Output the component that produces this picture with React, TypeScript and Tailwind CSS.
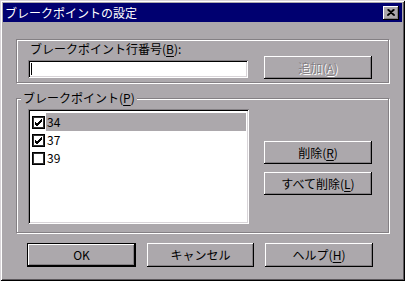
import React from "react";

const FONT = { fontFamily: '"Noto Sans CJK JP", "Noto Sans", sans-serif' };

const raised =
  "shadow-[inset_-1px_-1px_0_#000,inset_1px_1px_0_#fff,inset_-2px_-2px_0_#848084]";
const sunken =
  "shadow-[inset_1px_1px_0_#848084,inset_-1px_-1px_0_#fff,inset_2px_2px_0_#000,inset_-2px_-2px_0_#d8d4d8]";
const etched = "border border-[#848084] shadow-[inset_1px_1px_0_#fff,1px_1px_0_#fff]";

function U({ children }: { children: React.ReactNode }) {
  return <span className="underline underline-offset-2">{children}</span>;
}

function Btn({
  children,
  def,
  disabled,
  className = "",
}: {
  children: React.ReactNode;
  def?: boolean;
  disabled?: boolean;
  className?: string;
}) {
  return (
    <div
      className={`flex items-center justify-center bg-[#aca8ac] text-[12px] leading-none ${
        def ? "border border-black" : ""
      } ${className}`}
    >
      <div
        className={`flex h-full w-full items-center justify-center ${raised} ${
          disabled ? "text-[#848084] [text-shadow:1px_1px_0_#fff]" : "text-black"
        }`}
      >
        {children}
      </div>
    </div>
  );
}

function Check({ checked }: { checked: boolean }) {
  return (
    <div className="flex h-[13px] w-[13px] shrink-0 items-center justify-center border border-black bg-white shadow-[inset_1px_1px_0_#303030,inset_-1px_-1px_0_#303030]">
      {checked && (
        <svg width="9" height="9" viewBox="0 0 9 9">
          <path d="M1 4 L3 6 L8 1 M1 5 L3 7 L8 2 M1 6 L3 8 L8 3" stroke="#000" strokeWidth="1" fill="none" />
        </svg>
      )}
    </div>
  );
}

function Row({ n, checked, sel }: { n: string; checked: boolean; sel?: boolean }) {
  return (
    <div className="flex h-[18px] items-center">
      <div className="ml-[4px] mr-[1px]">
        <Check checked={checked} />
      </div>
      <div
        className={`flex h-[18px] flex-1 items-center pl-[1px] text-[12px] leading-none ${
          sel ? "bg-[#aca8ac]" : ""
        }`}
      >
        {n}
      </div>
    </div>
  );
}

export default function App() {
  return (
    <div
      style={FONT}
      className="flex h-[281px] w-[405px] flex-col bg-[#aca8ac] p-[3px] shadow-[inset_1px_1px_0_#d8d4d8,inset_-1px_-1px_0_#000,inset_2px_2px_0_#fff,inset_-2px_-2px_0_#5c585c]"
    >
      {/* title bar */}
      <div className="flex h-[19px] items-center justify-between bg-[#000070] pl-[2px] pr-[3px]">
        <span className="text-[12px] leading-none text-white">ブレークポイントの設定</span>
        <div className={`flex h-[14px] w-[16px] items-center justify-center bg-[#aca8ac] ${raised}`}>
          <svg width="8" height="7" viewBox="0 0 8 7">
            <path d="M0.5 0.5 L7 6.5 M1.5 0.5 L8 6.5 M6.5 0.5 L0 6.5 M7.5 0.5 L1 6.5" stroke="#000" strokeWidth="1.2" />
          </svg>
        </div>
      </div>

      {/* group 1 */}
      <div className={`relative mx-[13px] mt-[17px] h-[44px] ${etched}`}>
        <div className="absolute left-[13px] top-[2px] text-[12px] leading-[14px] text-black">
          ブレークポイント行番号(<U>B</U>):
        </div>
        <div className={`absolute left-[11px] top-[20px] flex h-[18px] w-[220px] items-center bg-white pl-[3px] ${sunken}`}>
          <div className="h-[12px] w-[1px] bg-black" />
        </div>
        <Btn disabled className="absolute left-[247px] top-[16px] h-[23px] w-[108px]">
          追加(<U>A</U>)
        </Btn>
      </div>

      {/* group 2 */}
      <div className={`relative mx-[13px] mt-[15px] h-[135px] ${etched}`}>
        <div className="absolute -top-[8px] left-[4px] bg-[#aca8ac] px-[2px] text-[12px] leading-[14px] text-black">
          ブレークポイント(<U>P</U>)
        </div>
        <div className={`absolute left-[11px] top-[10px] h-[115px] w-[221px] bg-white pr-[3px] pt-[4px] ${sunken}`}>
          <Row n="34" checked sel />
          <Row n="37" checked />
          <Row n="39" checked={false} />
        </div>
        <Btn className="absolute left-[247px] top-[42px] h-[23px] w-[108px]">
          削除(<U>R</U>)
        </Btn>
        <Btn className="absolute left-[247px] top-[73px] h-[23px] w-[108px]">
          すべて削除(<U>L</U>)
        </Btn>
      </div>

      {/* bottom buttons */}
      <div className="mt-[10px] flex gap-[11px] pl-[24px]">
        <Btn def className="h-[24px] w-[109px]">
          OK
        </Btn>
        <Btn className="h-[24px] w-[107px]">キャンセル</Btn>
        <Btn className="h-[24px] w-[108px]">
          ヘルプ(<U>H</U>)
        </Btn>
      </div>
    </div>
  );
}
